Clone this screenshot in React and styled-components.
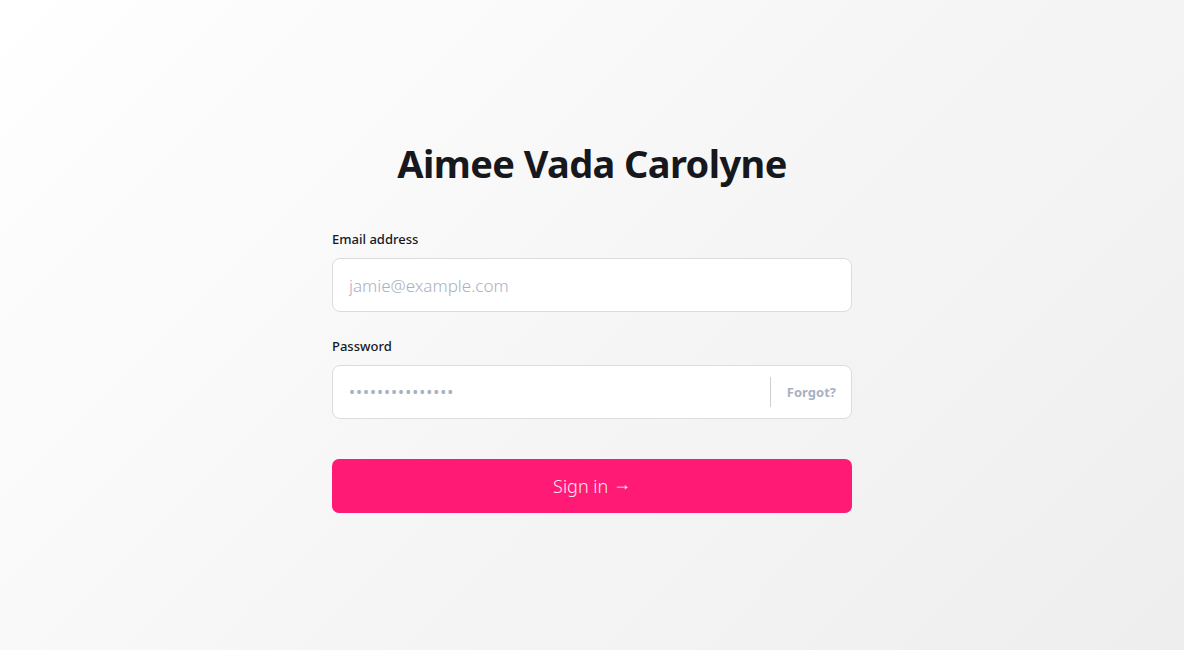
import React from 'react'
import styled, { createGlobalStyle } from 'styled-components'

const GlobalStyle = createGlobalStyle`
  html, body {
    margin: 0;
    padding: 0;
  }
  body {
    font-family: "Noto Sans", "Open Sans", sans-serif;
    color: #16181d;
  }
  * {
    box-sizing: border-box;
  }
`

function App() {
    return (
        <Page>
            <GlobalStyle />
            <Form onSubmit={e => e.preventDefault()}>
                <Title>Aimee Vada Carolyne</Title>
                <Field>
                    <Label htmlFor="email">Email address</Label>
                    <InputBox>
                        <Input id="email" type="email" placeholder="jamie@example.com" />
                    </InputBox>
                </Field>
                <Field>
                    <Label htmlFor="password">Password</Label>
                    <InputBox>
                        <Input id="password" type="password" $dots placeholder="•••••••••••••••" />
                        <Divider />
                        <Forgot href="#">Forgot?</Forgot>
                    </InputBox>
                </Field>
                <SignIn type="submit">Sign in <Arrow>→</Arrow></SignIn>
            </Form>
        </Page>
    )
}

export default App

const Page = styled.div`
    min-height: 100vh;
    display: flex;
    align-items: center;
    justify-content: center;
    background: linear-gradient(135deg, #ffffff 0%, #f6f6f6 50%, #eeeeee 100%);
`

const Form = styled.form`
    width: 520px;
    display: flex;
    flex-direction: column;
    margin-top: 2px;
`

const Title = styled.h1`
    margin: 0 0 43px;
    text-align: center;
    font-size: 38px;
    line-height: 48px;
    font-weight: 700;
    letter-spacing: -0.6px;
    color: #16181d;
`

const Field = styled.div`
    display: flex;
    flex-direction: column;
    gap: 10px;
    margin-bottom: 25px;

    &:last-of-type {
        margin-bottom: 40px;
    }
`

const Label = styled.label`
    font-size: 13px;
    line-height: 18px;
    font-weight: 500;
    color: #16181d;
`

const InputBox = styled.div`
    height: 54px;
    display: flex;
    align-items: center;
    background: #ffffff;
    border: 1px solid #dcdcdc;
    border-radius: 8px;
`

const Input = styled.input`
    flex: 1;
    min-width: 0;
    height: 100%;
    border: none;
    outline: none;
    background: transparent;
    padding: 0 16px;
    font-family: "Noto Sans", "Open Sans", sans-serif;
    font-size: ${p => (p.$dots ? '16px' : '17px')};
    font-weight: ${p => (p.$dots ? 400 : 300)};
    letter-spacing: ${p => (p.$dots ? '1px' : '0')};
    color: #16181d;

    &::placeholder {
        color: #a9b1bf;
    }
`

const Divider = styled.span`
    width: 1px;
    height: 30px;
    background: #cfcfcf;
`

const Forgot = styled.a`
    padding: 0 15px 0 16px;
    font-size: 13px;
    font-weight: 700;
    color: #a9b1bf;
    text-decoration: none;
`

const SignIn = styled.button`
    height: 54px;
    border: none;
    border-radius: 7px;
    background: #ff1a75;
    color: #ffe8f1;
    font-family: "Noto Sans", "Open Sans", sans-serif;
    font-size: 18px;
    font-weight: 300;
    cursor: pointer;
`

const Arrow = styled.span`
    display: inline-block;
    transform: translateY(-3px);
`
